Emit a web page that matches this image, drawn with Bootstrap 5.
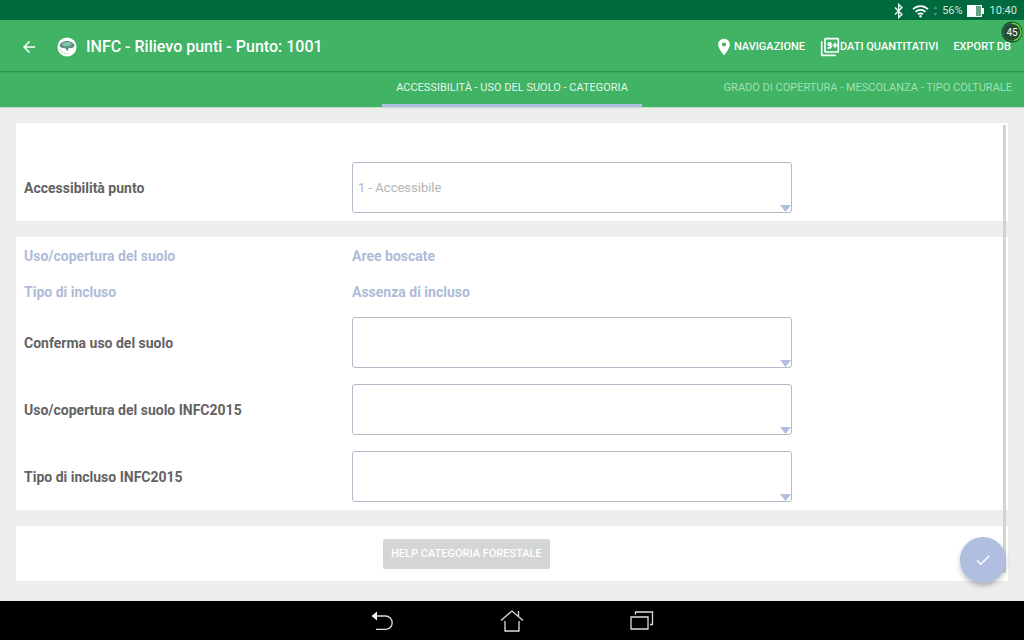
<!DOCTYPE html>
<html lang="it">
<head>
<meta charset="utf-8">
<meta name="viewport" content="width=device-width, initial-scale=1">
<title>INFC - Rilievo punti</title>
<link rel="stylesheet" href="https://cdn.jsdelivr.net/npm/bootstrap@5.3.0/dist/css/bootstrap.min.css">
<style>
  body { font-family: Roboto, "Liberation Sans", sans-serif; font-size: 14px; line-height: 20px; background: #ededed; color: #636363; }
  svg { display: block; flex: none; }
  .status-bar { height: 20px; background: #00693e; color: #d5e8de; font-size: 11px; padding: 1px 7px 0 0; }
  .clock { margin-left: 6px; }
  .app-bar { height: 51px; background: #40b364; padding: 2px 13px 0 20px; }
  .app-logo { margin-left: 19px; }
  .app-title { font-size: 16px; font-weight: 500; margin: 0 0 0 9px; }
  .actions { gap: 15px; }
  .action { font-size: 11px; font-weight: 500; color: #fff; background: none; border: 0; padding: 0; }
  .plain-btn { background: none; border: 0; padding: 0; color: #fff; }
  .counter { position: absolute; right: 1px; top: 1px; }
  .tab-strip { display: grid; grid-template-columns: 1fr auto 1fr; height: 36px; background: #40b364; box-shadow: inset 0 3px 2px -2px #1f8a42, 0 1px 1px #c4dccb; }
  .tab-link { font-size: 11px; line-height: 33px; padding: 0 12px; color: #a4e0b2; text-decoration: none; white-space: nowrap; }
  .tab-link.current { grid-column: 2; padding: 0 14px; color: #e4f7e8; border-bottom: 3px solid #b0bfdf; }
  .panel { background: #fff; padding: 0 8px; }
  .panel-spaced { padding-top: 31px; }
  .form-line { display: grid; grid-template-columns: 41fr 55fr 26fr; align-items: center; font-weight: 700; }
  .field-line { padding: 8px 0; }
  .read-line { height: 36px; padding-top: 2px; color: #aebbd9; }
  .picker { appearance: none; width: 100%; height: 51px; border: 1px solid #b3bbcb; border-radius: 3px; padding: 0 5px; font-size: 13px; color: #b3b3b3; opacity: 1;
    background: #fff url("data:image/svg+xml,%3Csvg xmlns='http://www.w3.org/2000/svg' width='12' height='7'%3E%3Cpath d='M1 0h11L6.500 7z' fill='%23b0bfdf'/%3E%3C/svg%3E") no-repeat right 0 bottom 0; }
  .help-panel { padding: 13px 0 12px 37%; }
  .help-btn { height: 30px; padding: 0 8px; border: 0; border-radius: 2px; background: #d4d5d5; color: #fff; font-size: 11px; font-weight: 500; display: block; }
  .scroll-thumb { position: absolute; right: 18px; top: 18px; bottom: 28px; width: 3px; background: #d3d3d3; }
  .fab { position: absolute; right: 18px; bottom: 18px; width: 46px; height: 46px; border: 0; border-radius: 50%; background: #b0bedf; box-shadow: 0 3px 5px rgba(0,0,0,.25); }
  .system-bar { height: 39px; background: #000; }
  .system-bar .plain-btn { width: 130px; }
</style>
</head>
<body>
<div class="d-flex flex-column min-vh-100">
  <div class="status-bar d-flex align-items-center justify-content-end">
    <svg width="10" height="16" viewBox="0 0 10 16" fill="none" stroke="#e4f2ea" stroke-width="1.5"><path d="M1 4.500l7 7L4.700 14.500V1.500L8 4.500l-7 7"/></svg>
    <svg class="ms-2" width="17" height="14" viewBox="0 0 17 14" fill="none" stroke="#fff" stroke-width="1.700"><path d="M1 5.200a10.600 10.600 0 0 1 15 0M3.500 7.900a7 7 0 0 1 10 0M6 10.400a3.500 3.500 0 0 1 5 0"/><circle cx="8.500" cy="12.300" r="1.200" fill="#fff" stroke="none"/></svg>
    <svg class="mx-1" width="5" height="12" viewBox="0 0 5 12" fill="#4b9273"><path d="M.5 4l2-3 2 3zM.5 8l2 3 2-3z"/></svg>
    <span>56%</span>
    <svg class="ms-1" width="17" height="12" viewBox="0 0 17 12"><path d="M0 0h15v3h2v6h-2v3H0z" fill="#fff"/><path d="M9 1h5v10H9z" fill="#64a485"/></svg>
    <span class="clock">10:40</span>
  </div>

  <header class="app-bar d-flex align-items-center text-white position-relative">
    <button class="plain-btn" type="button" aria-label="Indietro"><svg width="18" height="18" viewBox="0 0 24 24" fill="#fff"><path d="M20 11H7.830l5.590-5.590L12 4l-8 8 8 8 1.410-1.410L7.830 13H20z"/></svg></button>
    <svg class="app-logo" width="20" height="20" viewBox="0 0 20 20"><circle cx="10" cy="10" r="9.500" fill="#fff"/><path d="M2.500 8.500c0-2 2-2.500 3-3.500 2-1.500 6.500-1.500 8.500 0 1.500.6 3.500 1.700 3.500 3.500-.6 2.400-3 3-5 2.600L11 12l.4 1.500H9l.2-1.500-1.500-.8C5.500 11.500 2.800 10.500 2.500 8.500z" fill="#5f8f80"/><path d="M5 7.500c1.500-3 7-3.300 9.500-.7-.4 2.300-3 2.700-4.500 2.300-2 .4-4 .2-5-1.600z" fill="#80c6ae"/><path d="M2.500 12c2 3 5 4.500 9 4.800" fill="none" stroke="#8a9a94" stroke-width=".8" stroke-dasharray="1 1"/></svg>
    <h1 class="app-title me-auto">INFC - Rilievo punti - Punto: 1001</h1>
    <div class="actions d-flex align-items-center">
      <button class="action d-flex align-items-center" type="button"><svg width="20" height="20" viewBox="0 0 24 24" fill="#fff"><path d="M12 2C8.130 2 5 5.130 5 9c0 5.250 7 13 7 13s7-7.750 7-13c0-3.870-3.130-7-7-7zm0 9.500a2.500 2.500 0 1 1 0-5 2.500 2.500 0 0 1 0 5z"/></svg>NAVIGAZIONE</button>
      <button class="action d-flex align-items-center" type="button"><svg width="20" height="20" viewBox="0 0 24 24" fill="#fff"><path d="M3 5H1v16c0 1.100.9 2 2 2h16v-2H3V5zm11 7V8c0-1.110-.9-2-2-2h-1c-1.100 0-2 .89-2 2v1c0 1.110.9 2 2 2h1v1H9v2h3c1.100 0 2-.89 2-2zm-3-3V8h1v1h-1zm10-8H7c-1.100 0-2 .9-2 2v14c0 1.100.9 2 2 2h14c1.100 0 2-.9 2-2V3c0-1.100-.9-2-2-2zm0 8h-2V7h-2v2h-2v2h2v2h2v-2h2v6H7V3h14v6z"/></svg>DATI QUANTITATIVI</button>
      <button class="action" type="button">EXPORT DB</button>
    </div>
    <svg class="counter" width="22" height="22" viewBox="0 0 22 22"><circle cx="11" cy="11" r="10.500" fill="#174f2c"/><circle cx="11" cy="11" r="8.800" fill="#244b35" stroke="#3a7549"/><path d="M11 2.200a8.800 8.800 0 0 1 2 17.400" fill="none" stroke="#6bd03c" stroke-width="1.500"/><text x="11" y="14.500" text-anchor="middle" font-size="10" fill="#fff">45</text></svg>
  </header>

  <nav class="tab-strip">
    <a class="tab-link current" href="#" aria-current="page">ACCESSIBILITÀ - USO DEL SUOLO - CATEGORIA</a>
    <a class="tab-link text-end" href="#">GRADO DI COPERTURA - MESCOLANZA - TIPO COLTURALE</a>
  </nav>

  <main class="position-relative flex-grow-1 d-flex flex-column gap-3 p-3">
    <section class="panel panel-spaced">
      <div class="form-line field-line">
        <label for="accesso">Accessibilità punto</label>
        <select class="picker" id="accesso" disabled><option>1 - Accessibile</option></select>
      </div>
    </section>

    <section class="panel">
      <div class="form-line read-line"><span>Uso/copertura del suolo</span><span>Aree boscate</span></div>
      <div class="form-line read-line"><span>Tipo di incluso</span><span>Assenza di incluso</span></div>
      <div class="form-line field-line">
        <label for="conferma">Conferma uso del suolo</label>
        <select class="picker" id="conferma"><option></option></select>
      </div>
      <div class="form-line field-line">
        <label for="uso">Uso/copertura del suolo INFC2015</label>
        <select class="picker" id="uso"><option></option></select>
      </div>
      <div class="form-line field-line">
        <label for="tipo">Tipo di incluso INFC2015</label>
        <select class="picker" id="tipo"><option></option></select>
      </div>
    </section>

    <section class="help-panel bg-white">
      <button class="help-btn" type="button">HELP CATEGORIA FORESTALE</button>
    </section>

    <div class="scroll-thumb"></div>
    <button class="fab d-flex align-items-center justify-content-center" type="button" aria-label="Conferma"><svg width="18" height="18" viewBox="0 0 24 24" fill="#fff"><path d="M9 16.170L4.830 12l-1.420 1.410L9 19 21 7l-1.410-1.410z"/></svg></button>
  </main>

  <footer class="system-bar d-flex align-items-center justify-content-center">
    <button class="plain-btn d-flex justify-content-center" type="button" aria-label="Indietro"><svg width="22" height="22" viewBox="0 0 22 22" fill="none" stroke="#ddd" stroke-width="1.300"><path d="M5 6h9.500a6.700 6.700 0 0 1 0 13.400H5"/><path d="M.5 6L6 1.500v9z" fill="#fff" stroke="none"/></svg></button>
    <button class="plain-btn d-flex justify-content-center" type="button" aria-label="Home"><svg width="24" height="24" viewBox="0 0 24 24" fill="none" stroke="#ddd" stroke-width="1.300"><path d="M1 11.500L12 2l11 9.500M5 12v10h14V12M18.500 2v5.500"/></svg></button>
    <button class="plain-btn d-flex justify-content-center" type="button" aria-label="Recenti"><svg width="24" height="22" viewBox="0 0 24 22" fill="none" stroke="#ddd" stroke-width="1.300"><path d="M1 7h17v12H1zM5.500 4.500V2h17v12.500H20"/></svg></button>
  </footer>
</div>
<script src="https://cdn.jsdelivr.net/npm/bootstrap@5.3.0/dist/js/bootstrap.bundle.min.js"></script>
</body>
</html>
